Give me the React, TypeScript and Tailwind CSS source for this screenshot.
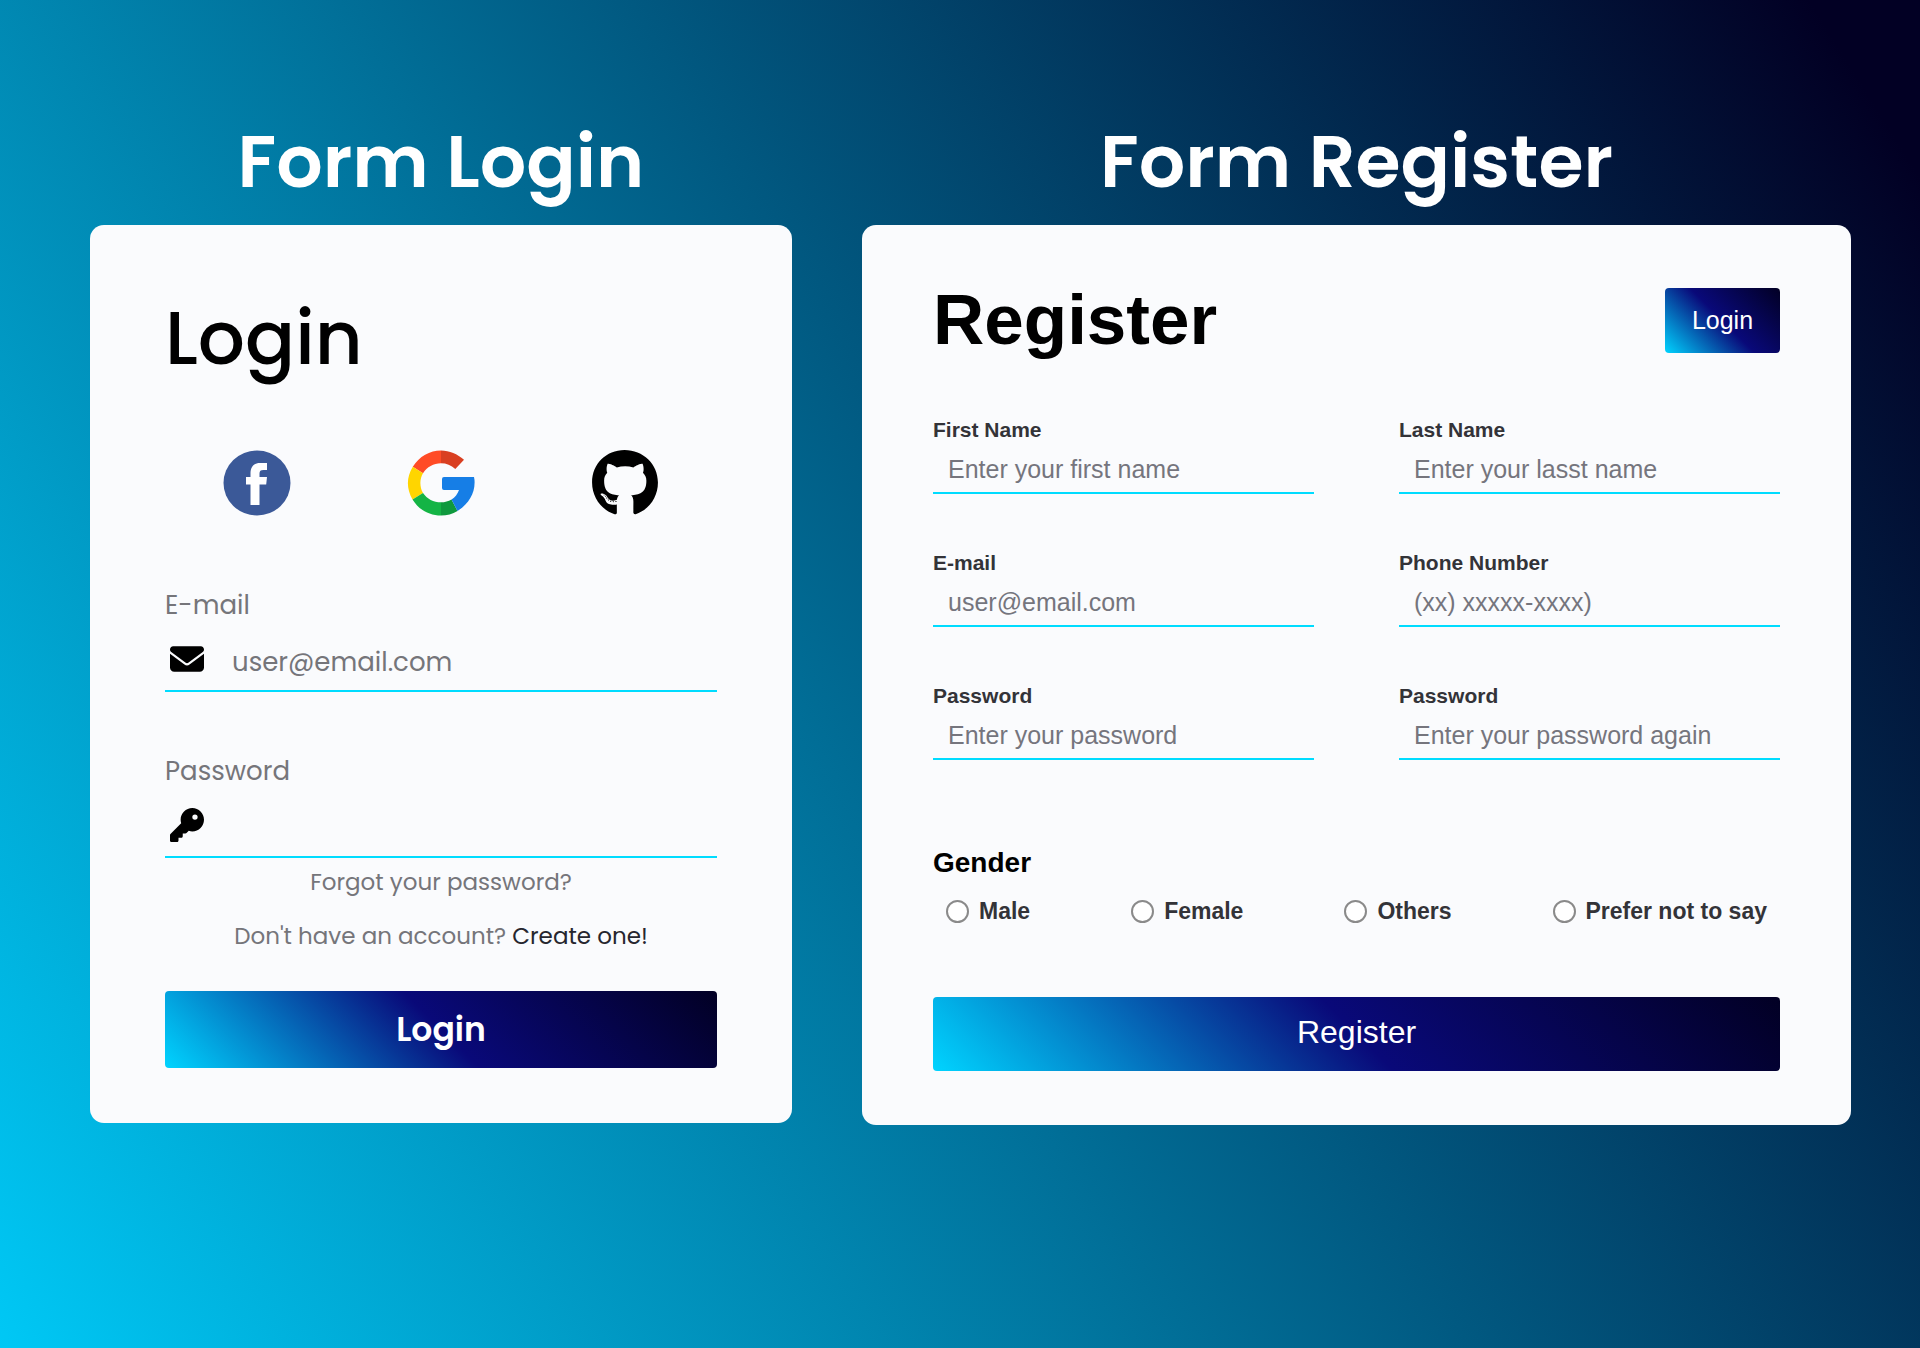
import { useId } from "react";
import type { ReactNode } from "react";
import { FaEnvelope, FaKey, FaGithub } from "react-icons/fa6";

const buttonGradient = "bg-[linear-gradient(45deg,#00d4ff_0%,#090979_50%,#020024_100%)] text-white";

function FacebookLogo() {
  return (
    <svg viewBox="0 0 68 66" className="h-[66px] w-[68px]" aria-hidden="true">
      <ellipse cx="34" cy="33" rx="33.5" ry="32.5" fill="#3b5998" />
      <path
        fill="#fff"
        d="M27.500 55V34.500H23V27h4.500v-3.500c0-7 3.500-10.500 9.500-10.500h7v7h-3.500c-3 0-4 1-4 3.500V27H44l-.8 7.500h-6.700V55z"
      />
    </svg>
  );
}

function GoogleLogo() {
  return (
    <svg viewBox="0 0 68 66" className="h-[66px] w-[68px]" aria-hidden="true">
      <path fill="#ff4b26" d="M34 .5C23 .5 12 6.500 5.800 16.800L16 23.200C20 17 26.500 13.300 34 13.300z" />
      <path fill="#d93f21" d="M34 .5v12.800c5.500 0 10 2 14.300 5.700L57 9.800C50.500 4 42.500.5 34 .5z" />
      <path fill="#ffd500" d="M5.800 16.800C-.7 27.500-.7 38.500 5.500 49.500L16 43c-3.500-6-3.500-14 0-19.800z" />
      <path fill="#14b445" d="M5.500 49.500C12 60 22.500 65.500 34 65.500V52.300c-7.500 0-14-3.300-18-9.300z" />
      <path fill="#0f993e" d="M34 65.500c6 0 11.500-1.500 16.500-4.500L44.500 49.500c-3.200 1.900-6.500 2.800-10.500 2.800z" />
      <path fill="#167ee6" d="M67 27H37q-2 0-2 2v9q0 2 2 2h15c-1.300 4-4 7.300-7.500 9.500L50.500 61C61.500 54 68.500 43 67.500 30z" />
    </svg>
  );
}

function SocialButton({ label, children }: { label: string; children: ReactNode }) {
  return (
    <div className="flex flex-1 justify-center">
      <button type="button" aria-label={label}>
        {children}
      </button>
    </div>
  );
}

function LoginField({ label, type, placeholder, icon }: { label: string; type: string; placeholder?: string; icon: ReactNode }) {
  const id = useId();
  return (
    <div>
      <label htmlFor={id} className="block text-[26px] leading-8 text-[#75757a]">
        {label}
      </label>
      <div className="flex h-[71px] items-center border-b-2 border-[#00dcff] pt-1.5">
        <span className="ml-1 flex w-9 justify-center text-[34px] text-black">{icon}</span>
        <input
          id={id}
          type={type}
          placeholder={placeholder}
          className="ml-[27px] w-0 min-w-0 flex-1 bg-transparent pt-1.5 text-[26px] leading-8 outline-none placeholder:text-[#75757a]"
        />
      </div>
    </div>
  );
}

function LoginCard() {
  return (
    <form className="flex flex-col rounded-[14px] bg-[#fafbfd] px-[75px] pt-[69px] pb-[55px]">
      <h2 className="text-[74px] leading-[88px] font-medium text-black">Login</h2>
      <div className="mt-[67px] flex">
        <SocialButton label="Facebook">
          <FacebookLogo />
        </SocialButton>
        <SocialButton label="Google">
          <GoogleLogo />
        </SocialButton>
        <SocialButton label="GitHub">
          <FaGithub className="size-[68px] text-black" />
        </SocialButton>
      </div>
      <div className="mt-[72px] flex flex-col gap-[63px]">
        <LoginField label="E-mail" type="email" placeholder="user@email.com" icon={<FaEnvelope />} />
        <LoginField label="Password" type="password" icon={<FaKey />} />
      </div>
      <div className="mt-2 flex flex-col items-center gap-[22px] text-[23px] leading-8 text-[#75757a]">
        <a href="#forgot">Forgot your password?</a>
        <p>
          Don't have an account?{" "}
          <a href="#register" className="text-[#26262e]">
            Create one!
          </a>
        </p>
      </div>
      <button type="submit" className={"mt-[39px] h-[77px] rounded text-[33px] font-semibold " + buttonGradient}>
        Login
      </button>
    </form>
  );
}

function RegisterField({ label, type, placeholder }: { label: string; type: string; placeholder: string }) {
  const id = useId();
  return (
    <div>
      <label htmlFor={id} className="block text-[21px] leading-6 font-bold text-[#333338]">
        {label}
      </label>
      <input
        id={id}
        type={type}
        placeholder={placeholder}
        className="block h-[52px] w-full border-b-2 border-[#00dcff] bg-transparent px-[15px] pt-1 text-[25px] outline-none placeholder:text-[#75757d]"
      />
    </div>
  );
}

const registerFields = [
  { label: "First Name", type: "text", placeholder: "Enter your first name" },
  { label: "Last Name", type: "text", placeholder: "Enter your lasst name" },
  { label: "E-mail", type: "email", placeholder: "user@email.com" },
  { label: "Phone Number", type: "tel", placeholder: "(xx) xxxxx-xxxx)" },
  { label: "Password", type: "password", placeholder: "Enter your password" },
  { label: "Password", type: "password", placeholder: "Enter your password again" },
];

const genders = ["Male", "Female", "Others", "Prefer not to say"];

function RegisterCard() {
  return (
    <form className="flex flex-col rounded-[14px] bg-[#fafbfd] px-[71px] pt-[55px] pb-[54px] font-['Liberation_Sans',Arial,sans-serif]">
      <div className="flex items-start justify-between">
        <h2 className="text-[71px] leading-[80px] font-bold text-black">Register</h2>
        <button type="button" className={"mt-2 h-[65px] w-[115px] rounded text-[25px] " + buttonGradient}>
          Login
        </button>
      </div>
      <div className="mt-[58px] grid grid-cols-2 gap-x-[85px] gap-y-[57px]">
        {registerFields.map((field, index) => (
          <RegisterField key={index} {...field} />
        ))}
      </div>
      <fieldset className="mt-[85px]">
        <legend className="text-[28px] leading-9 font-bold text-black">Gender</legend>
        <div className="mt-[14px] flex justify-between px-[13px]">
          {genders.map((gender) => (
            <label key={gender} className="flex items-center gap-[10px] text-[23px] leading-8 font-bold text-[#333338]">
              <input
                type="radio"
                name="gender"
                className="size-[23px] appearance-none rounded-full border-2 border-[#8a8a8a] bg-white checked:border-[7px] checked:border-[#0075ff]"
              />
              {gender}
            </label>
          ))}
        </div>
      </fieldset>
      <button type="submit" className={"mt-[70px] h-[74px] rounded pb-1 text-[32px] " + buttonGradient}>
        Register
      </button>
    </form>
  );
}

function Panel({ title, children }: { title: string; children: ReactNode }) {
  return (
    <section className="flex min-w-0 flex-col">
      <h1 className="mb-[18px] text-center text-[73px] leading-[90px] font-semibold text-white">{title}</h1>
      {children}
    </section>
  );
}

export default function App() {
  return (
    <main className="min-h-screen bg-[linear-gradient(58deg,#00c8f5_0%,#020024_96%)] pt-[117px] pr-[69px] pb-16 pl-[90px] font-['Poppins','Inter',sans-serif]">
      <div className="grid grid-cols-[702fr_989fr] items-start gap-[70px]">
        <Panel title="Form Login">
          <LoginCard />
        </Panel>
        <Panel title="Form Register">
          <RegisterCard />
        </Panel>
      </div>
    </main>
  );
}
